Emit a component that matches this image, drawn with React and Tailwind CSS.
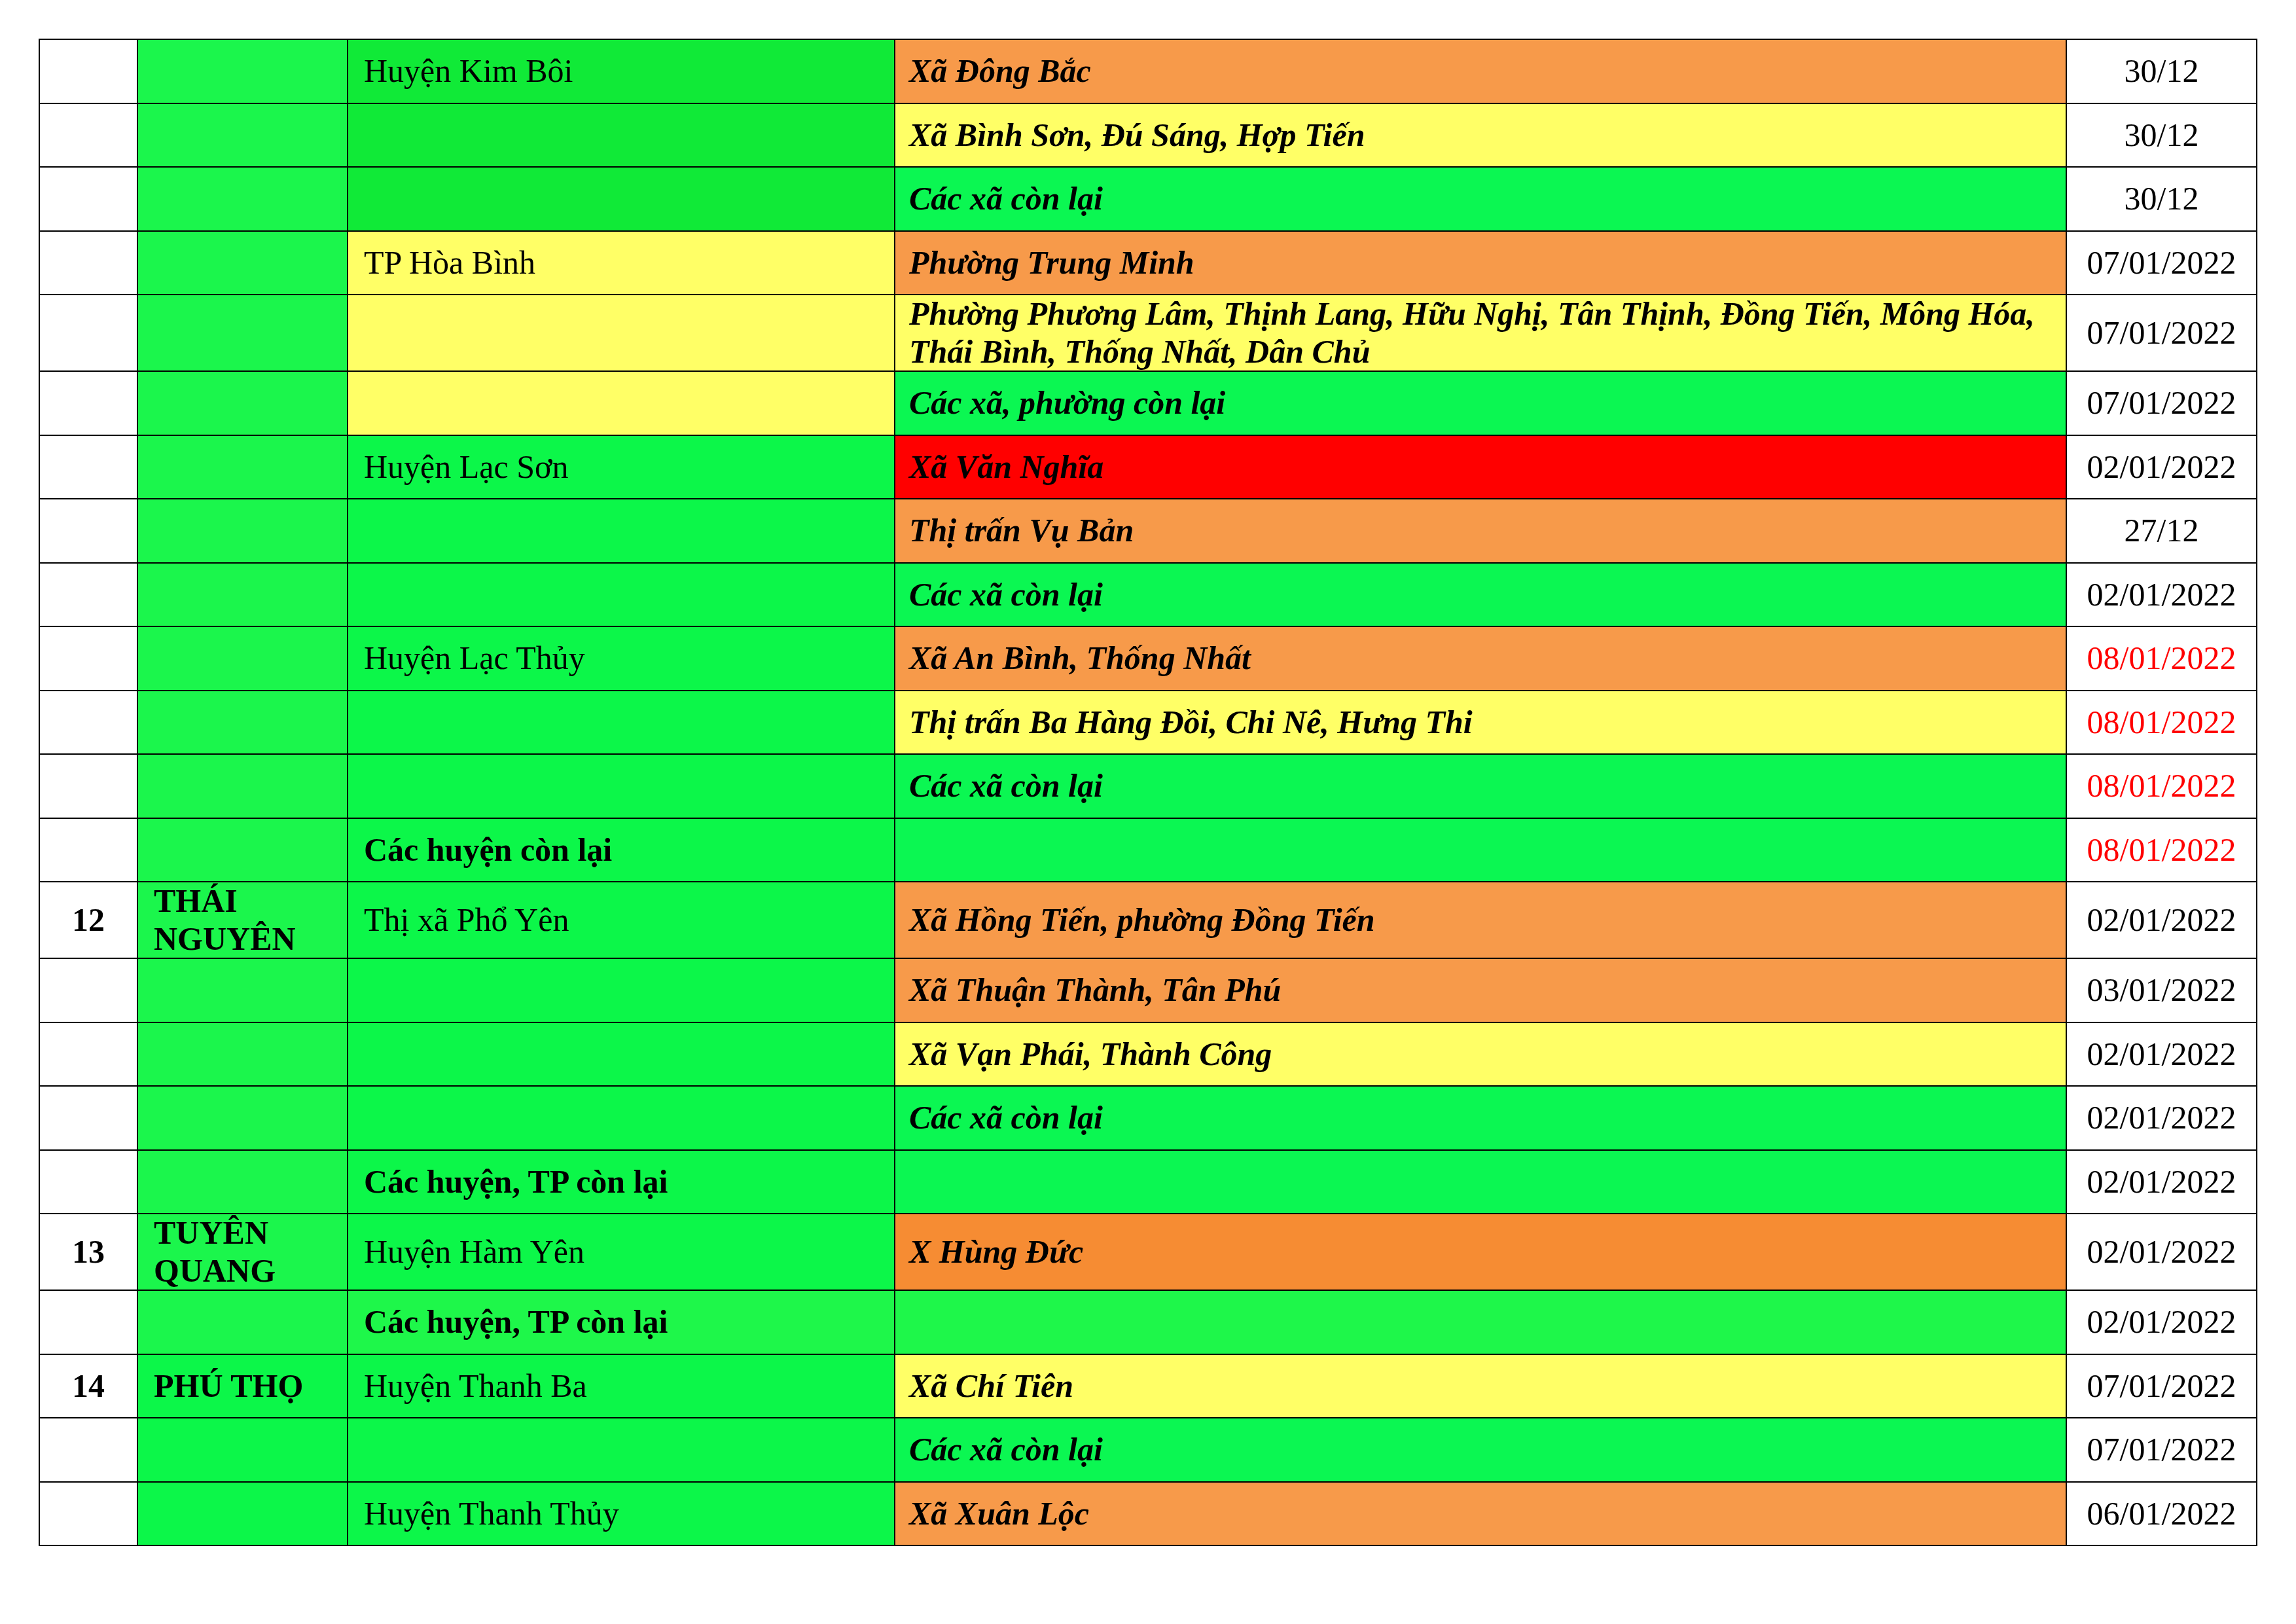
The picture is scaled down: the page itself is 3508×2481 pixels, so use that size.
const ORANGE = "bg-[#f79a4a]";
const ORANGE2 = "bg-[#f68c33]";
const YELLOW = "bg-[#ffff66]";
const RED = "bg-[#ff0000]";
const PROV = "bg-[#1bf64c]";
const DIST = "bg-[#0cf749]";
const COMM = "bg-[#0bf752]";
const KIMBOI = "bg-[#10ea37]";
const LIGHT = "bg-[#1ef74a]";

const rows = [
  { prov: "", provBg: PROV, dist: "Huyện Kim Bôi", distBg: KIMBOI, comm: "Xã Đông Bắc", commBg: ORANGE, date: "30/12" },
  { distBg: KIMBOI, comm: "Xã Bình Sơn, Đú Sáng, Hợp Tiến", commBg: YELLOW, date: "30/12" },
  { distBg: KIMBOI, comm: "Các xã còn lại", commBg: COMM, date: "30/12" },
  { dist: "TP Hòa Bình", distBg: YELLOW, comm: "Phường Trung Minh", commBg: ORANGE, date: "07/01/2022" },
  {
    distBg: YELLOW,
    comm: "Phường Phương Lâm, Thịnh Lang, Hữu Nghị, Tân Thịnh, Đồng Tiến, Mông Hóa, Thái Bình, Thống Nhất, Dân Chủ",
    commBg: YELLOW,
    date: "07/01/2022",
  },
  { distBg: YELLOW, comm: "Các xã, phường còn lại", commBg: COMM, date: "07/01/2022" },
  { dist: "Huyện Lạc Sơn", comm: "Xã Văn Nghĩa", commBg: RED, date: "02/01/2022" },
  { comm: "Thị trấn Vụ Bản", commBg: ORANGE, date: "27/12" },
  { comm: "Các xã còn lại", commBg: COMM, date: "02/01/2022" },
  { dist: "Huyện Lạc Thủy", comm: "Xã An Bình, Thống Nhất", commBg: ORANGE, date: "08/01/2022", red: true },
  { comm: "Thị trấn Ba Hàng Đồi, Chi Nê, Hưng Thi", commBg: YELLOW, date: "08/01/2022", red: true },
  { comm: "Các xã còn lại", commBg: COMM, date: "08/01/2022", red: true },
  { dist: "Các huyện còn lại", distBold: true, commBg: COMM, date: "08/01/2022", red: true },
  { no: "12", prov: "THÁI NGUYÊN", dist: "Thị xã Phổ Yên", comm: "Xã Hồng Tiến, phường Đồng Tiến", commBg: ORANGE, date: "02/01/2022" },
  { comm: "Xã Thuận Thành, Tân Phú", commBg: ORANGE, date: "03/01/2022" },
  { comm: "Xã Vạn Phái, Thành Công", commBg: YELLOW, date: "02/01/2022" },
  { comm: "Các xã còn lại", commBg: COMM, date: "02/01/2022" },
  { dist: "Các huyện, TP còn lại", distBold: true, commBg: COMM, date: "02/01/2022" },
  { no: "13", prov: "TUYÊN QUANG", dist: "Huyện Hàm Yên", comm: "X Hùng Đức", commBg: ORANGE2, date: "02/01/2022" },
  { dist: "Các huyện, TP còn lại", distBold: true, distBg: LIGHT, commBg: LIGHT, date: "02/01/2022" },
  { no: "14", prov: "PHÚ THỌ", provBg: DIST, dist: "Huyện Thanh Ba", comm: "Xã Chí Tiên", commBg: YELLOW, date: "07/01/2022" },
  { provBg: DIST, comm: "Các xã còn lại", commBg: COMM, date: "07/01/2022" },
  { provBg: DIST, dist: "Huyện Thanh Thủy", comm: "Xã Xuân Lộc", commBg: ORANGE, date: "06/01/2022" },
];

const cell = "flex items-center min-h-[95.5px]";

export default function App() {
  return (
    <div className="min-h-screen w-full bg-white pt-[59px] pl-[59px] font-['Liberation_Serif','Times_New_Roman',serif] text-[50px] leading-[57.5px] text-black">
      <div className="grid w-fit grid-cols-[148px_319px_834px_1788px_289px] gap-[2px] border-2 border-black bg-black">
        {rows.map((r, i) => (
          <div key={i} className="contents">
            <div className={`${cell} justify-center bg-white font-bold`}>{r.no || ""}</div>
            <div className={`${cell} ${r.provBg || PROV} pl-[24px] pr-2 font-bold`}>{r.prov || ""}</div>
            <div className={`${cell} ${r.distBg || DIST} pl-[24px] pr-2 ${r.distBold ? "font-bold" : ""}`}>
              {r.dist || ""}
            </div>
            <div className={`${cell} ${r.commBg} pl-[21px] pr-[18px] font-bold italic`}>{r.comm || ""}</div>
            <div className={`${cell} justify-center bg-white ${r.red ? "text-[#ff0000]" : ""}`}>{r.date}</div>
          </div>
        ))}
      </div>
    </div>
  );
}
